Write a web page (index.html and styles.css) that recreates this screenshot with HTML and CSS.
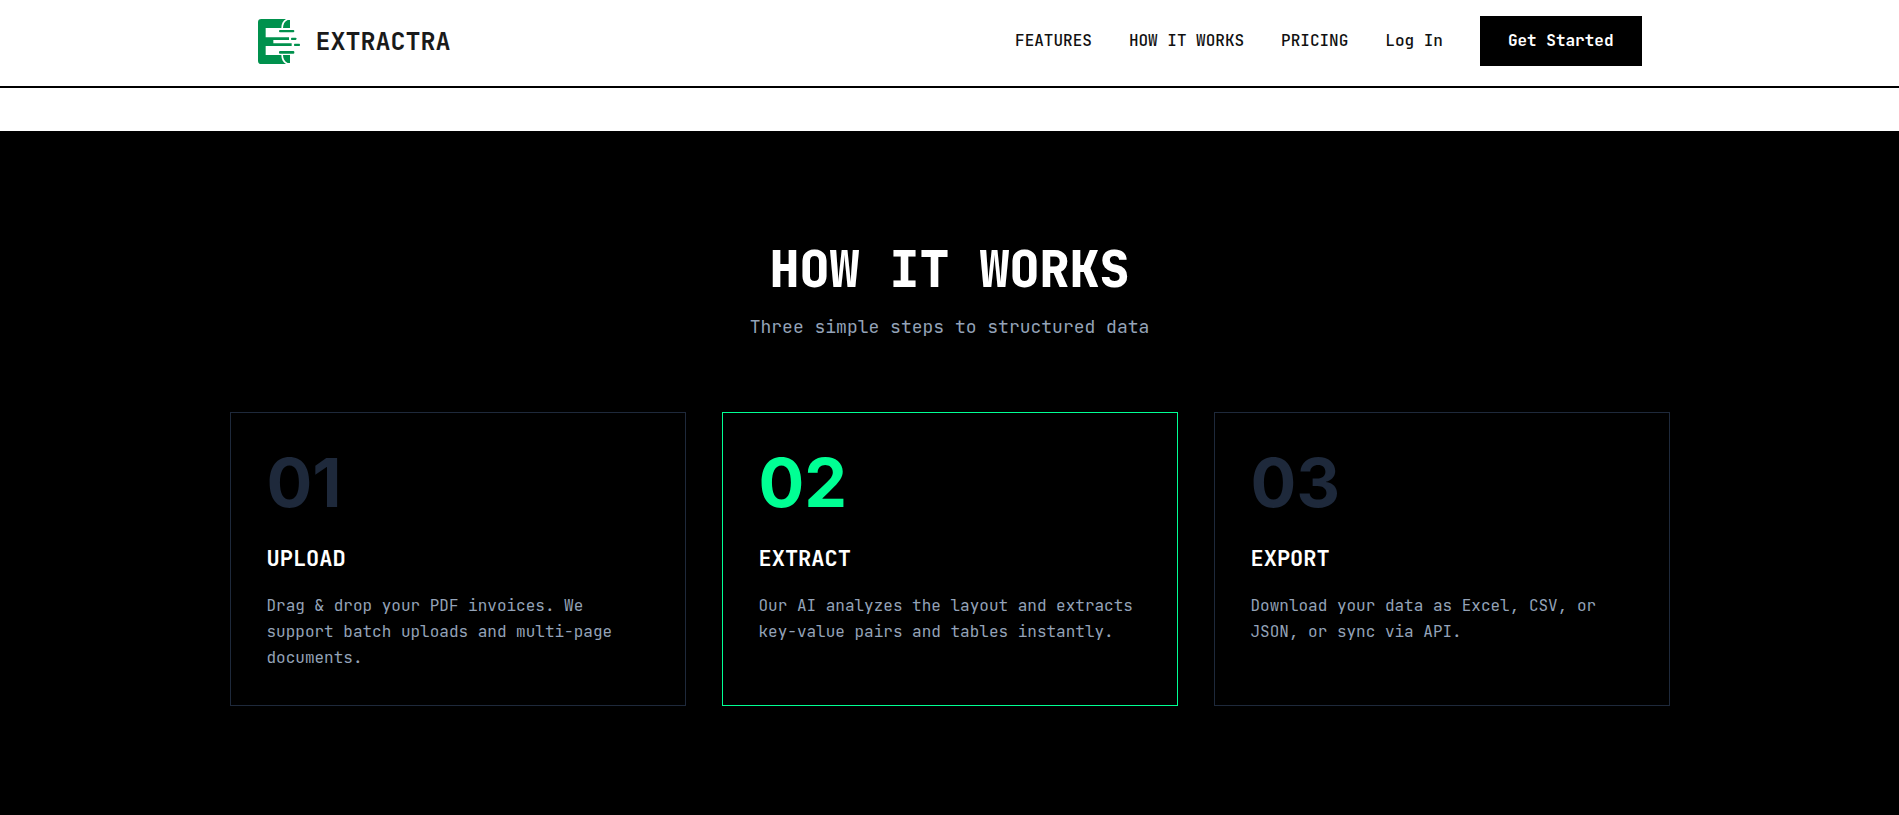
FILE: index.html
```
<!DOCTYPE html>
<html lang="en">

<head>
    <meta charset="UTF-8">
    <meta name="viewport" content="width=device-width, initial-scale=1.0">
    <title>Extractra</title>
    <link rel="stylesheet" href="styles.css">
</head>

<body>
    <header class="header">
        <div class="container nav">
            <a href="#" class="logo">
                <svg class="logo-icon" viewBox="57 57 129 135" aria-hidden="true">
                    <!-- letter body -->
                    <path d="M67 57H141C132 62 127 71 127 84H80V112H150V120H103V130H158V138H80V165H127C127 178 132 187 141 192H67Q57 192 57 182V67Q57 57 67 57Z" />
                    <!-- page curls -->
                    <path d="M132 84C132 73 137 64 146 60H153V84Z" />
                    <path d="M132 165C132 176 137 185 146 189H153V165Z" />
                    <!-- speed lines -->
                    <rect x="120" y="90" width="46" height="7" rx="3" />
                    <rect x="120" y="153" width="46" height="8" rx="3" />
                    <rect x="156" y="113" width="16" height="7" rx="2" />
                    <rect x="165" y="131" width="18" height="7" rx="2" />
                </svg>
                <span>EXTRACTRA</span>
            </a>
            <nav class="nav-links">
                <a href="#features" class="nav-link">FEATURES</a>
                <a href="#how-it-works" class="nav-link">HOW IT WORKS</a>
                <a href="#pricing" class="nav-link">PRICING</a>
                <a href="#login" class="nav-link">Log In</a>
                <button type="button" class="btn">Get Started</button>
            </nav>
        </div>
    </header>

    <main class="main">
        <section id="how-it-works" class="steps">
            <div class="steps-inner">
                <div class="steps-head">
                    <h2>HOW IT WORKS</h2>
                    <p>Three simple steps to structured data</p>
                </div>
                <div class="steps-grid">
                    <div class="step">
                        <div class="step-number">01</div>
                        <h3>UPLOAD</h3>
                        <p>Drag &amp; drop your PDF invoices. We support batch uploads and multi-page documents.</p>
                    </div>
                    <div class="step active">
                        <div class="step-number">02</div>
                        <h3>EXTRACT</h3>
                        <p>Our AI analyzes the layout and extracts key-value pairs and tables instantly.</p>
                    </div>
                    <div class="step">
                        <div class="step-number">03</div>
                        <h3>EXPORT</h3>
                        <p>Download your data as Excel, CSV, or JSON, or sync via API.</p>
                    </div>
                </div>
            </div>
        </section>
    </main>
</body>

</html>
```
FILE: styles.css
```
* {
    margin: 0;
    padding: 0;
    box-sizing: border-box;
}

body {
    font-family: "JetBrains Mono", "DejaVu Sans Mono", monospace;
    font-size: 16px;
    line-height: 26px;
    color: #111;
    background: #fff;
}

a {
    color: inherit;
    text-decoration: none;
}

.container {
    max-width: 1440px;
    margin: 0 auto;
    padding: 0 28px;
}

/* header */
.header {
    padding: 16px 0 20px;
    background: #fff;
    border-bottom: 2px solid #000;
}

.nav {
    display: flex;
    justify-content: space-between;
    align-items: center;
}

.logo {
    display: flex;
    align-items: center;
    gap: 15px;
    font-size: 25px;
    font-weight: 700;
    color: #1a1a1a;
}

.logo-icon {
    width: 43px;
    height: 45px;
    fill: #00914d;
}

.nav-links {
    display: flex;
    align-items: center;
    gap: 37px;
}

.nav-link {
    font-weight: 500;
}

.btn {
    padding: 12px 28px;
    font: inherit;
    font-weight: 700;
    color: #fff;
    background: #000;
    border: none;
    cursor: pointer;
}

/* how it works */
.main {
    padding-top: 43px;
}

.steps {
    padding: 108px 24px 109px;
    background: #000;
    color: #fff;
}

.steps-inner {
    max-width: 1440px;
    margin: 0 auto;
}

.steps-head {
    margin-bottom: 70px;
    text-align: center;
}

.steps-head h2 {
    margin-bottom: 13px;
    font-size: 50px;
    font-weight: 800;
    line-height: 60px;
}

.steps-head p {
    font-size: 18px;
    line-height: 30px;
    color: #94a3b8;
}

.steps-grid {
    display: grid;
    grid-template-columns: repeat(3, 1fr);
    gap: 36px;
}

.step {
    padding: 36px 36px 34px;
    border: 1px solid #1e293b;
}

.step-number {
    margin-bottom: 29px;
    font-family: Inter, sans-serif;
    font-size: 68px;
    font-weight: 700;
    line-height: 66px;
    color: #1e293b;
}

.step h3 {
    margin-bottom: 19px;
    font-size: 22px;
    font-weight: 700;
    line-height: 30px;
}

.step p {
    color: #94a3b8;
}

.step.active {
    border-color: #00ff94;
}

.step.active .step-number {
    color: #00ff94;
}

@media (max-width: 1100px) {
    .nav {
        flex-wrap: wrap;
        gap: 16px;
    }

    .nav-links {
        flex-wrap: wrap;
        gap: 18px;
    }

    .steps-grid {
        grid-template-columns: 1fr;
    }
}
```
